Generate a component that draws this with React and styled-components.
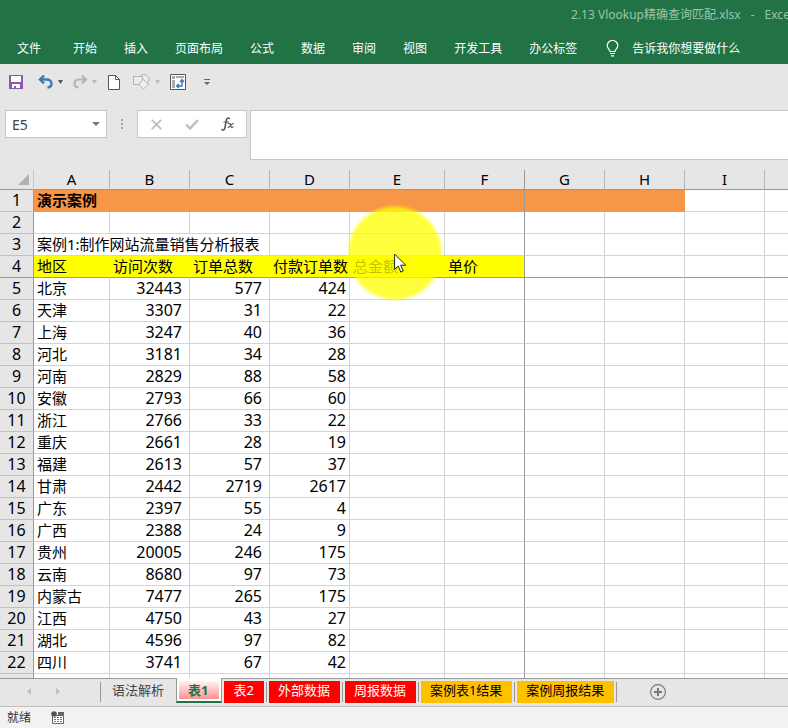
import React from "react";
import styled, { createGlobalStyle, css } from "styled-components";

const GlobalStyle = createGlobalStyle`
  * { box-sizing: border-box; }
  body { margin: 0; }
  body, button, input {
    font-family: "Noto Sans", "Noto Sans CJK SC", sans-serif;
  }
  button, input { margin: 0; padding: 0; border: 0; background: none; color: inherit; }
`;

const Window = styled.div`
  display: flex;
  flex-direction: column;
  height: 100vh;
  overflow: hidden;
  background: #e6e6e6;
  color: #000;
`;

const Header = styled.header`
  flex: none;
  background: #217346;
  color: #fff;
  overflow: hidden;
`;

const TitleBar = styled.div`
  display: flex;
  gap: 10px;
  height: 30px;
  padding-left: 571px;
  font-size: 12px;
  line-height: 30px;
  white-space: nowrap;
  color: #9bc4ab;
`;

const RibbonTabs = styled.nav`
  display: flex;
  align-items: center;
  height: 34px;
  padding: 3px 0 0 17px;
`;

const RibbonTab = styled.button`
  flex: none;
  margin-right: ${(p) => (p.$wide ? "32px" : "27px")};
  font-size: 12px;
  line-height: 20px;
  white-space: nowrap;
`;

const TellMe = styled(RibbonTab)`
  display: flex;
  align-items: center;
  gap: 13px;
  margin: 0 0 0 2px;
`;

const QuickAccess = styled.div`
  flex: none;
  display: flex;
  align-items: center;
  height: 36px;
  padding-left: 3px;
`;

const ToolButton = styled.button`
  flex: none;
  display: flex;
  align-items: center;
  justify-content: center;
  gap: 4px;
  width: ${(p) => p.$width}px;
  height: 24px;
`;

const FormulaRow = styled.div`
  flex: none;
  display: flex;
  align-items: flex-start;
  height: 70px;
  padding: 10px 0 0 5px;
`;

const Boxed = styled.div`
  display: flex;
  align-items: center;
  height: 28px;
  background: #fff;
  border: 1px solid #c6c6c6;
`;

const NameBox = styled(Boxed)`
  flex: none;
  width: 102px;
`;

const NameInput = styled.input`
  flex: 1;
  min-width: 0;
  height: 26px;
  padding-left: 6px;
  font-size: 14px;
  color: #444;
  outline: none;
`;

const Grip = styled.div`
  flex: none;
  display: flex;
  align-items: center;
  justify-content: center;
  width: 30px;
  height: 28px;
`;

const FormulaActions = styled(Boxed)`
  flex: none;
  width: 110px;
`;

const FormulaInput = styled.input`
  flex: 1;
  min-width: 0;
  height: 50px;
  margin-left: 3px;
  padding: 0 6px;
  background: #fff;
  border: 1px solid #c6c6c6;
  border-right: 0;
  font-size: 14px;
  outline: none;
`;

const Sheet = styled.main`
  position: relative;
  flex: 1;
  min-height: 0;
  overflow: hidden;
  background: #fff;
`;

const Grid = styled.table`
  width: 100%;
  min-width: 788px;
  table-layout: fixed;
  border-collapse: separate;
  border-spacing: 0;

  tr > :last-child { border-right: 0; }
`;

const Col = styled.col`
  width: ${(p) => (p.$width ? `${p.$width}px` : "auto")};
`;

const headCell = css`
  padding: 0;
  background: #e6e6e6;
  font-size: 15px;
  font-weight: 400;
  text-align: center;
`;

const ColumnHead = styled.th`
  ${headCell}
  height: 20px;
  line-height: 19px;
  border-bottom: 1px solid #999;
  border-right: 1px solid ${(p) => (p.$frozen ? "#999" : "#b5b5b5")};
`;

const Corner = styled.th`
  ${headCell}
  height: 20px;
  border-right: 1px solid #c6c6c6;
  border-bottom: 1px solid #999;
`;

const CornerMark = styled.svg`
  display: block;
  margin: 0 4px 0 auto;
`;

const RowHead = styled.th`
  ${headCell}
  font-size: 16px;
  height: 22px;
  line-height: 21px;
  border-right: 1px solid #999;
  border-bottom: 1px solid ${(p) => (p.$frozen ? "#999" : "#c0c0c0")};
`;

const fills = { orange: "#f79646", yellow: "#ffff00" };

const Cell = styled.td`
  height: 22px;
  padding: 0 ${(p) => p.$end}px 0 3px;
  overflow: hidden;
  font-size: ${(p) => (p.$number ? 16 : 15)}px;
  font-weight: ${(p) => (p.$bold ? 700 : 400)};
  line-height: 21px;
  text-align: ${(p) => (p.$number ? "right" : "left")};
  white-space: nowrap;
  background: ${(p) => fills[p.$fill] || "#fff"};
  border-right: 1px solid ${(p) => (p.$frozenX ? "#999" : fills[p.$fill] || "#d4d4d4")};
  border-bottom: 1px solid ${(p) => (p.$frozenY ? "#999" : fills[p.$fill] || "#d4d4d4")};
`;

const Spotlight = styled.div`
  position: absolute;
  left: 346px;
  top: 34px;
  width: 98px;
  height: 98px;
  border-radius: 50%;
  background: radial-gradient(circle closest-side, rgba(255, 255, 0, 0.76) 90%, rgba(255, 255, 0, 0) 100%);
  pointer-events: none;
`;

const Pointer = styled.svg`
  position: absolute;
  left: 394px;
  top: 83px;
  pointer-events: none;
`;

const SheetBar = styled.nav`
  flex: none;
  display: flex;
  align-items: flex-start;
  height: 29px;
  border-top: 1px solid #999;
  border-bottom: 1px solid #c0c0c0;
`;

const SheetNav = styled.div`
  flex: none;
  display: flex;
  width: 100px;
  height: 25px;
  padding-left: 15px;
`;

const TabSlot = styled.div`
  flex: none;
  display: flex;
  align-items: flex-start;
  height: 25px;
  padding: 2px ${(p) => (p.$plain ? 0 : 2)}px 0;
`;

const Divider = styled.div`
  flex: none;
  width: 1px;
  height: 20px;
  margin-top: 3px;
  background: #999;
`;

const tabColors = {
  red: ["#ff0000", "#fff"],
  amber: ["#ffc000", "#000"],
  plain: ["transparent", "#444"],
};

const SheetTab = styled.button`
  height: 22px;
  padding: ${(p) => (p.$color === "plain" ? "0 12px 3px 11px" : "0 10px 3px 9px")};
  background: ${(p) => tabColors[p.$color][0]};
  color: ${(p) => tabColors[p.$color][1]};
  font-size: 13px;
  line-height: 19px;
  white-space: nowrap;
`;

const ActiveTab = styled.button`
  flex: none;
  height: 25px;
  margin-top: -1px;
  padding: 3px 2px 2px;
  background: #fff;
  border: 1px solid #999;
  border-top: 0;
  border-bottom: 2px solid #217346;
`;

const ActiveLabel = styled.span`
  display: block;
  height: 18px;
  padding: 0 11px 0 9px;
  background: linear-gradient(#fff4f4, #ff9292);
  color: #217346;
  font-size: 13px;
  font-weight: 700;
  line-height: 18px;
`;

const AddSheet = styled(ToolButton)`
  margin: 1px 0 0 29px;
`;

const StatusBar = styled.footer`
  flex: none;
  display: flex;
  align-items: center;
  gap: 20px;
  height: 21px;
  padding-left: 7px;
  background: #f2f2f2;
  color: #333;
  font-size: 12px;
  line-height: 20px;
`;

const ribbon = [
  ["文件", true], ["开始"], ["插入"], ["页面布局"], ["公式"], ["数据"],
  ["审阅"], ["视图"], ["开发工具"], ["办公标签"],
];

const columns = [
  ["A", 76], ["B", 80], ["C", 80], ["D", 80], ["E", 95],
  ["F", 80], ["G", 80], ["H", 80], ["I", 80], ["", 0],
];

const regions = [
  ["北京", 32443, 577, 424], ["天津", 3307, 31, 22], ["上海", 3247, 40, 36],
  ["河北", 3181, 34, 28], ["河南", 2829, 88, 58], ["安徽", 2793, 66, 60],
  ["浙江", 2766, 33, 22], ["重庆", 2661, 28, 19], ["福建", 2613, 57, 37],
  ["甘肃", 2442, 2719, 2617], ["广东", 2397, 55, 4], ["广西", 2388, 24, 9],
  ["贵州", 20005, 246, 175], ["云南", 8680, 97, 73], ["内蒙古", 7477, 265, 175],
  ["江西", 4750, 43, 27], ["湖北", 4596, 97, 82], ["四川", 3741, 67, 42],
];

const rows = [
  ["演示案例"],
  [],
  ["案例1:制作网站流量销售分析报表"],
  ["地区", "访问次数", "订单总数", "付款订单数", "总金额", "单价"],
  ...regions,
];

const sheetTabs = [
  ["表2", "red"], ["外部数据", "red"], ["周报数据", "red"],
  ["案例表1结果", "amber"], ["案例周报结果", "amber"],
];

function fillOf(row, col) {
  if (row === 1 && col < 8) return "orange";
  if (row === 4 && col < 6) return "yellow";
  return undefined;
}

function endPadding(value, col) {
  if (typeof value !== "number") return 1;
  return col === 3 ? 3 : 7;
}

function Caret({ color, width = 5 }) {
  return (
    <svg width={width} height="4" viewBox="0 0 8 4" preserveAspectRatio="none" aria-hidden="true">
      <path d="M0 0h8L4 4z" fill={color} />
    </svg>
  );
}

function Row({ number, values }) {
  const cells = [];
  for (let col = 0; col < columns.length; col += 1) {
    const span = number === 3 && col === 0 ? 3 : 1;
    const value = values[col];
    cells.push(
      <Cell
        key={col}
        colSpan={span}
        $number={typeof value === "number"}
        $end={endPadding(value, col)}
        $bold={number === 1}
        $fill={fillOf(number, col)}
        $frozenX={col === 5}
        $frozenY={number === 4}
      >
        {value}
      </Cell>
    );
    col += span - 1;
  }
  return (
    <tr>
      <RowHead scope="row" $frozen={number === 4}>{number}</RowHead>
      {cells}
    </tr>
  );
}

export default function App() {
  return (
    <Window>
      <GlobalStyle />
      <Header>
        <TitleBar>
          <span>2.13 Vlookup精确查询匹配.xlsx</span>
          <span>-</span>
          <span>Excel</span>
        </TitleBar>
        <RibbonTabs>
          {ribbon.map(([label, wide]) => (
            <RibbonTab key={label} $wide={wide}>{label}</RibbonTab>
          ))}
          <TellMe>
            <svg width="13" height="17" viewBox="0 0 13 17" fill="none" stroke="#fff" aria-hidden="true">
              <path d="M4 11.5c0-2-2.8-3-2.8-6a5.3 5 0 0 1 10.6 0c0 3-2.8 4-2.8 6z" strokeWidth="1.2" />
              <path d="M4 13.5h5M5 15.8h3" strokeWidth="1.2" />
            </svg>
            告诉我你想要做什么
          </TellMe>
        </RibbonTabs>
      </Header>

      <QuickAccess>
        <ToolButton $width={26} aria-label="保存">
          <svg width="14" height="14" viewBox="0 0 14 14">
            <path d="M0 0h14v14H0z" fill="#8e58b0" />
            <path d="M2 1h10v6H2zM3 9h8v4H3z" fill="#fff" />
            <path d="M5 11h2v2H5z" fill="#8e58b0" />
          </svg>
        </ToolButton>
        <ToolButton $width={42} aria-label="撤消">
          <svg width="16" height="14" viewBox="0 0 16 14" fill="none" stroke="#3b78b4">
            <path d="M2 4.5h6.5c3 0 5 1.6 5 4s-1.5 3.8-4 4" strokeWidth="2.4" />
            <path d="M6 .6 2 4.5l4 3.9" strokeWidth="2.4" />
          </svg>
          <Caret color="#555" />
        </ToolButton>
        <ToolButton $width={27} aria-label="恢复">
          <svg width="16" height="14" viewBox="0 0 16 14" fill="none" stroke="#b5b5b5">
            <path d="M14 4.5H7.5c-3 0-5 1.6-5 4s1.5 3.8 4 4" strokeWidth="2.2" />
            <path d="m10 .6 4 3.9-4 3.9" strokeWidth="2.2" />
          </svg>
          <Caret color="#bbb" />
        </ToolButton>
        <ToolButton $width={32} aria-label="新建">
          <svg width="12" height="15" viewBox="0 0 12 15" fill="#fff" stroke="#555">
            <path d="M.5.5h7l4 4v10H.5z" />
            <path d="M7.5.5v4h4" fill="none" />
          </svg>
        </ToolButton>
        <ToolButton $width={32} aria-label="形状">
          <svg width="18" height="16" viewBox="0 0 18 16" fill="#eceaef" stroke="#b3b0b6">
            <circle cx="11" cy="5.5" r="5" />
            <path d="M.5 2.5h9v8h-9z" />
            <path d="m10.5 5.5 4.8 4.8-4.8 4.8-4.8-4.8z" fill="#f2f0f4" />
          </svg>
          <Caret color="#bbb" />
        </ToolButton>
        <ToolButton $width={32} aria-label="数据透视表">
          <svg width="16" height="16" viewBox="0 0 16 16">
            <path d="M.5.5h15v15H.5z" fill="#fff" stroke="#555" />
            <path d="M2 2h3v3H2zM6 2h8v2H6zM2 6h3v8H2z" fill="#aaa" />
            <path d="M12 6v6H7M10 8l2-2.5L14 8M9 10l-2.5 2L9 14" fill="none" stroke="#2e75b6" strokeWidth="1.3" />
          </svg>
        </ToolButton>
        <ToolButton $width={26} aria-label="自定义快速访问工具栏">
          <svg width="6" height="7" viewBox="0 0 6 7" fill="#666">
            <path d="M0 0h6v1H0zM0 3h6L3 6z" />
          </svg>
        </ToolButton>
      </QuickAccess>

      <FormulaRow>
        <NameBox>
          <NameInput aria-label="名称框" defaultValue="E5" />
          <ToolButton $width={20} aria-label="名称列表"><Caret color="#777" width={8} /></ToolButton>
        </NameBox>
        <Grip>
          <svg width="2" height="10" viewBox="0 0 2 10" fill="#a6a6a6" aria-hidden="true">
            <path d="M0 0h2v2H0zM0 4h2v2H0zM0 8h2v2H0z" />
          </svg>
        </Grip>
        <FormulaActions>
          <ToolButton $width={36} aria-label="取消">
            <svg width="11" height="11" viewBox="0 0 11 11" stroke="#bdbdbd" strokeWidth="1.8">
              <path d="m.8.8 9.4 9.4M10.2.8.8 10.2" />
            </svg>
          </ToolButton>
          <ToolButton $width={36} aria-label="输入">
            <svg width="14" height="11" viewBox="0 0 14 11" fill="none" stroke="#bdbdbd" strokeWidth="2.4">
              <path d="m1 5.5 4 4L13 1" />
            </svg>
          </ToolButton>
          <ToolButton $width={36} aria-label="插入函数">
            <svg width="14" height="14" viewBox="0 0 14 14" fill="none" stroke="#555" strokeLinecap="round">
              <path d="M8.3 1.4C6.8.4 5.8 1.4 5.4 3.4L3.9 10.6C3.5 12.8 2.5 13.6 1 12.6" strokeWidth="1.6" />
              <path d="M3 5h4.5" strokeWidth="1.2" />
              <path d="M7.3 6.6c1.8-.9 2 .3 2.4 2 .4 1.8.8 2.4 2.4 1.5M12.4 6.5c-2-.4-3.4 4.2-5.3 3.8" strokeWidth="1.2" />
            </svg>
          </ToolButton>
        </FormulaActions>
        <FormulaInput aria-label="编辑栏" />
      </FormulaRow>

      <Sheet>
        <Grid>
          <colgroup>
            <Col $width={34} />
            {columns.map(([name, width], i) => <Col key={name || i} $width={width} />)}
          </colgroup>
          <thead>
            <tr>
              <Corner aria-label="全选">
                <CornerMark width="11" height="11" viewBox="0 0 11 11">
                  <path d="M11 0v11H0z" fill="#b2b2b2" />
                </CornerMark>
              </Corner>
              {columns.map(([name], i) => (
                <ColumnHead key={name || i} scope="col" $frozen={i === 5}>{name}</ColumnHead>
              ))}
            </tr>
          </thead>
          <tbody>
            {rows.map((values, i) => <Row key={i} number={i + 1} values={values} />)}
            <Row values={[]} />
          </tbody>
        </Grid>
        <Spotlight />
        <Pointer width="13" height="21" viewBox="0 0 13 21" aria-hidden="true">
          <path d="M.6 1v15.4l3.6-3.3 2.6 6 2.5-1.1-2.6-5.8h5z" fill="#fff" stroke="#222" />
        </Pointer>
      </Sheet>

      <SheetBar>
        <SheetNav>
          <ToolButton $width={28} aria-label="上一个工作表">
            <svg width="4" height="7" viewBox="0 0 4 7"><path d="M4 0v7L0 3.5z" fill="#bdbdbd" /></svg>
          </ToolButton>
          <ToolButton $width={29} aria-label="下一个工作表">
            <svg width="4" height="7" viewBox="0 0 4 7"><path d="M0 0v7l4-3.5z" fill="#bdbdbd" /></svg>
          </ToolButton>
        </SheetNav>
        <Divider />
        <TabSlot $plain><SheetTab $color="plain">语法解析</SheetTab></TabSlot>
        <ActiveTab aria-current="page"><ActiveLabel>表1</ActiveLabel></ActiveTab>
        {sheetTabs.map(([label, color]) => (
          <React.Fragment key={label}>
            <TabSlot><SheetTab $color={color}>{label}</SheetTab></TabSlot>
            <Divider />
          </React.Fragment>
        ))}
        <AddSheet $width={24} aria-label="新工作表">
          <svg width="16" height="16" viewBox="0 0 16 16" fill="none" stroke="#777">
            <circle cx="8" cy="8" r="7.4" strokeWidth="1.1" />
            <path d="M8 4v8M4 8h8" strokeWidth="2" />
          </svg>
        </AddSheet>
      </SheetBar>

      <StatusBar>
        就绪
        <svg width="13" height="13" viewBox="0 0 13 13" aria-hidden="true">
          <path d="M1.5 4.5h11v8h-11z" fill="#fff" stroke="#666" />
          <path d="M7 1h6v3H7z" fill="#666" />
          <path d="M3 6h2v1H3zM6 6h2v1H6zM9 6h2v1H9zM3 8h2v1H3zM6 8h2v1H6zM9 8h2v1H9zM3 10h2v1H3zM6 10h2v1H6zM9 10h2v1H9z" fill="#777" />
          <circle cx="3" cy="3" r="2.8" fill="#555" />
        </svg>
      </StatusBar>
    </Window>
  );
}
